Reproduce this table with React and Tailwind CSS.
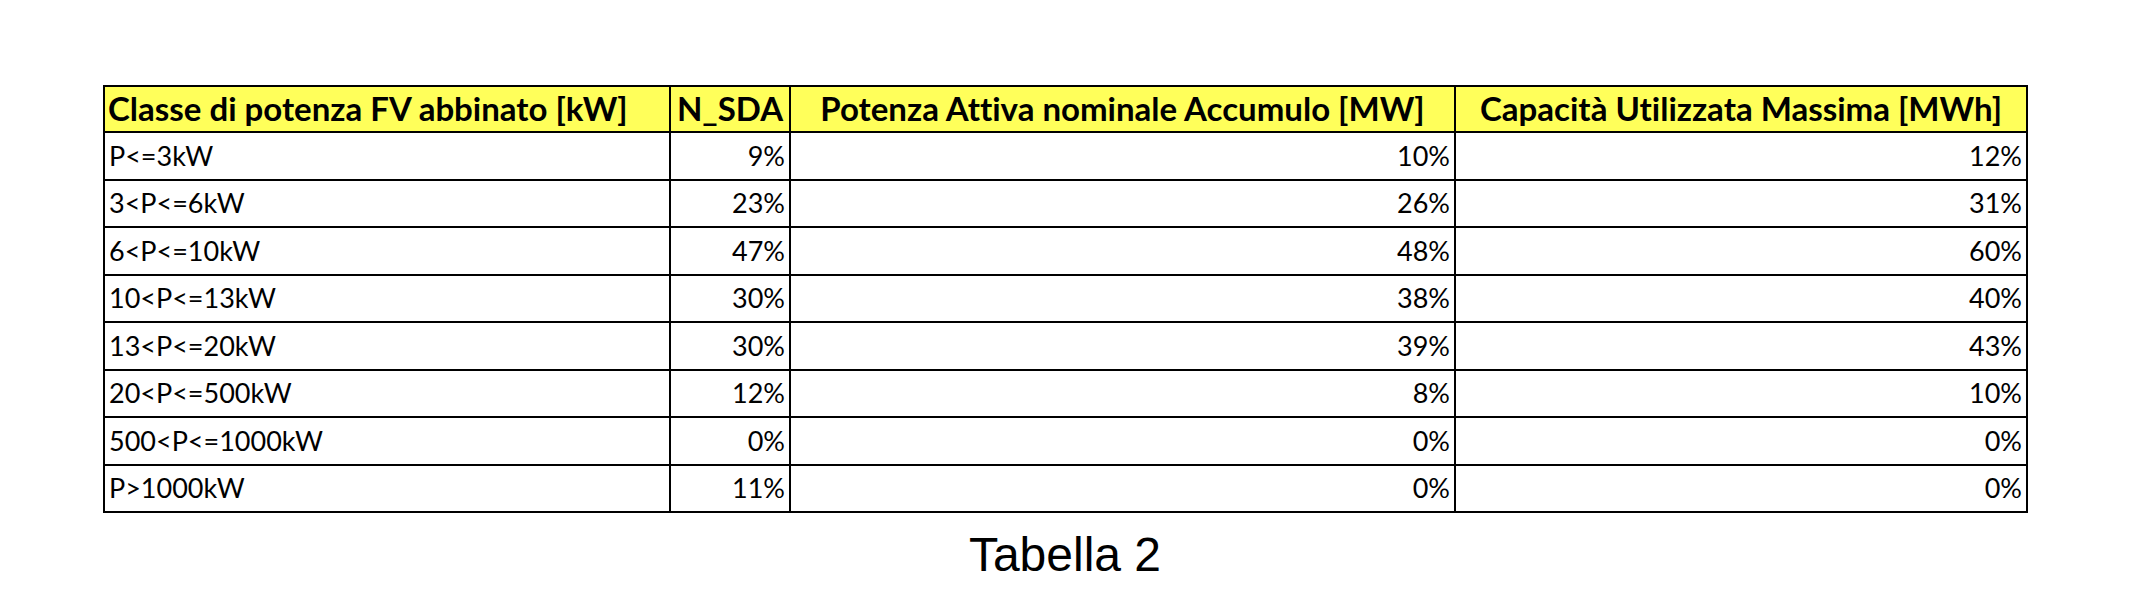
import React from 'react';

const header = [
    { label: 'Classe di potenza FV abbinato [kW]', align: 'justify-start' },
    { label: 'N_SDA', align: 'justify-center' },
    { label: 'Potenza Attiva nominale Accumulo [MW]', align: 'justify-center' },
    { label: 'Capacità Utilizzata Massima [MWh]', align: 'justify-center' },
];

const rows = [
    ['P<=3kW', '9%', '10%', '12%'],
    ['3<P<=6kW', '23%', '26%', '31%'],
    ['6<P<=10kW', '47%', '48%', '60%'],
    ['10<P<=13kW', '30%', '38%', '40%'],
    ['13<P<=20kW', '30%', '39%', '43%'],
    ['20<P<=500kW', '12%', '8%', '10%'],
    ['500<P<=1000kW', '0%', '0%', '0%'],
    ['P>1000kW', '11%', '0%', '0%'],
];

const App = () => {
    return (
        <div className="min-h-screen bg-white pt-[85px]">
            <div
                className="ml-[103px] grid w-fit grid-cols-[564px_118px_663px_570px] gap-[2px] bg-black p-[2px] text-black [font-variant-ligatures:none]"
                style={{ fontFamily: 'Lato, "Open Sans", sans-serif' }}
            >
                {header.map((h) => (
                    <div key={h.label} className={`flex h-[44px] items-center whitespace-nowrap bg-[#ffff5a] px-[3px] text-[33px] font-bold ${h.align}`}>
                        {h.label}
                    </div>
                ))}
                {rows.map((r) =>
                    r.map((cell, i) => (
                        <div
                            key={r[0] + i}
                            className={`flex h-[45.5px] items-center bg-white px-[4px] text-[27px] ${i === 0 ? 'justify-start' : 'justify-end'}`}
                        >
                            {cell}
                        </div>
                    ))
                )}
            </div>
            <div
                className="mt-[18px] text-center text-[48px] leading-none"
                style={{ fontFamily: '"Liberation Sans", Arial, sans-serif' }}
            >
                Tabella 2
            </div>
        </div>
    );
};

export default App;
